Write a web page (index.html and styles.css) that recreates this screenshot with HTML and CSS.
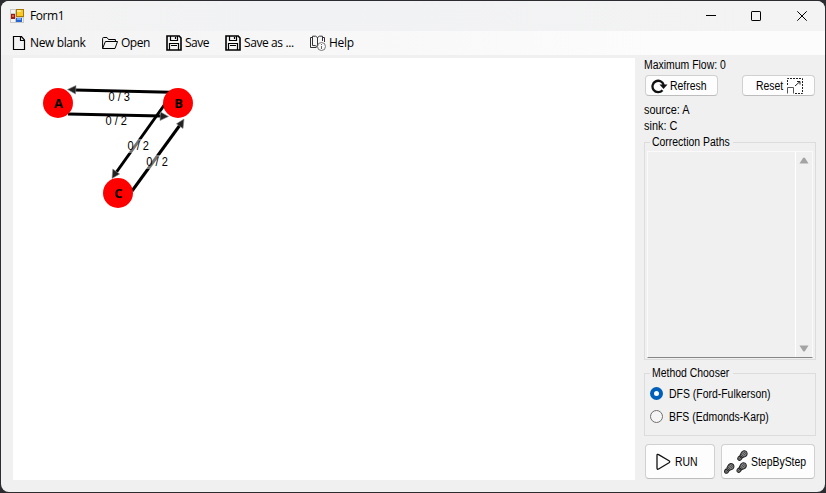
FILE: index.html
```html
<!DOCTYPE html>
<html lang="en">
<head>
<meta charset="utf-8">
<title>Form1</title>
<link rel="stylesheet" href="styles.css">
</head>
<body>
<div class="window">
  <header class="titlebar">
    <svg class="app-icon" width="14" height="14" viewBox="0 0 14 14" shape-rendering="crispEdges">
      <rect width="14" height="14" fill="#c9c9c9"/><rect x="1" y="1" width="4" height="3" fill="#f4f4f4"/><rect x="1" y="10" width="4" height="3" fill="#f4f4f4"/><rect x="12" y="9" width="1" height="4" fill="#f4f4f4"/>
      <rect x="6" y="0" width="8" height="8" fill="#a87808"/><rect x="7" y="1" width="6" height="6" fill="#fbc926"/><rect x="7" y="1" width="4" height="2" fill="#ffe58a"/>
      <rect x="1" y="5" width="4" height="5" fill="#9b1c12"/><rect x="2" y="6" width="2" height="2" fill="#e0604a"/>
      <rect x="6" y="9" width="6" height="4" fill="#2766d0"/><rect x="7" y="9" width="4" height="2" fill="#76a8f4"/>
    </svg>
    <span class="title">Form1</span>
    <div class="controls">
      <svg width="10" height="10" viewBox="0 0 10 10"><path d="M0 4.5H10"/></svg>
      <svg width="10" height="10" viewBox="0 0 10 10"><rect x=".5" y=".5" width="9" height="9" rx=".6"/></svg>
      <svg width="10" height="10" viewBox="0 0 10 10"><path d="M.3.3 9.7 9.7M9.7.3.3 9.7"/></svg>
    </div>
  </header>
  <nav class="toolbar">
    <div class="tool new"><svg width="16" height="16" viewBox="0 0 16 16"><path stroke-width="1.200" d="M2.500 1.500h8l3 3.500v9.500h-11zM9.500 1.500v4h4"/></svg><span>New blank</span></div>
    <div class="tool open"><svg width="16" height="16" viewBox="0 0 16 16"><path d="M.6 13.5V3.5q0-1 1-1H5l1.500 2h6.900v2M.6 13.500 3.400 6.500h12.100l-2.500 7H.6"/></svg><span>Open</span></div>
    <div class="tool save"><svg width="16" height="16" viewBox="0 0 16 16"><path stroke-width="1.600" d="M1 1h12.200L15 3v12H1z"/><path stroke-width="1.200" d="M4.500 1v4.500h7V1M9.500 2v2M3.500 15V8.500h9V15M5 10.500h6"/></svg><span>Save</span></div>
    <div class="tool saveas"><svg width="16" height="16" viewBox="0 0 16 16"><path stroke-width="1.600" d="M1 1h12.200L15 3v12H1z"/><path stroke-width="1.200" d="M4.500 1v4.500h7V1M9.500 2v2M3.500 15V8.500h9V15M5 10.500h6"/></svg><span>Save as ...</span></div>
    <div class="tool help"><svg width="16" height="16" viewBox="0 0 16 16"><path stroke="#333" d="M7.500 11V2.500Q6 .5 2.500 1.200v9.300q3-.3 5 1.200M7.500 2.500Q9 .5 12.500 1.200V6M2.500 2.500h-2v10h6M12.500 2.500h2V7"/><circle cx="11.500" cy="11.500" r="4" stroke="#777"/><path stroke="#666" d="M11.500 9v1M11.500 11v3"/></svg><span>Help</span></div>
  </nav>
  <main class="content">
    <svg class="canvas" width="622" height="422" viewBox="13 58 622 422">
      <g class="edges">
        <path d="M170 92.200 75 90"/><path d="M68 114 161 116"/><path d="M165 104 116.500 172"/><path d="M132 191 180 125"/>
      </g>
      <g class="heads">
        <path d="M67.500 89.500 76 85.500 75.500 94z"/><path d="M168.500 116.500 160 120.500 160.500 112z"/><path d="M112 178.500 112.800 169 119.600 174z"/><path d="M184 119 183 128.500 176.500 123.800z"/>
      </g>
      <g class="nodes"><circle cx="58" cy="103" r="15"/><circle cx="178" cy="103" r="15"/><circle cx="118" cy="193" r="15"/></g>
      <g class="plates"><rect x="127" y="139" width="22" height="14"/><rect x="146" y="155" width="22" height="14"/></g>
      <g class="weights">
        <text x="108.500" y="101" textLength="21.500" lengthAdjust="spacingAndGlyphs">0 / 3</text><text x="105.500" y="125" textLength="21.500" lengthAdjust="spacingAndGlyphs">0 / 2</text>
        <text x="127.500" y="150" textLength="21.500" lengthAdjust="spacingAndGlyphs">0 / 2</text><text x="146.300" y="166" textLength="21.500" lengthAdjust="spacingAndGlyphs">0 / 2</text>
      </g>
      <g class="names"><text x="58.500" y="108">A</text><text x="178.500" y="108">B</text><text x="118.500" y="198">C</text></g>
    </svg>
    <aside class="side">
      <div class="line flow"><span class="label">Maximum Flow: 0</span></div>
      <div class="buttons">
        <button class="btn refresh"><svg width="17" height="16" viewBox="0 0 17 16"><path d="M11.500 12.200A5.700 5.700 0 1 1 12.700 7" fill="none" stroke="#111" stroke-width="2.300"/><path d="M8.500 6.500H16.500L12.500 11z" fill="#111"/></svg><span class="label">Refresh</span></button>
        <button class="btn reset"><span class="label">Reset</span><svg width="16" height="16" viewBox="0 0 16 16" fill="none" stroke="#222"><path d="M.5 7V.5h15v15H8" stroke-dasharray="2 1"/><path d="M.5 15.500v-6h6v6" stroke="#555"/><path d="m8 8 5-4.500M10 3.500h3v3"/></svg></button>
      </div>
      <div class="line source"><span class="label wide">source: A</span></div>
      <div class="line"><span class="label wide">sink: C</span></div>
      <fieldset class="group paths">
        <legend class="lg-paths"><span class="label">Correction Paths</span></legend>
        <div class="listbox"><div class="scroll"><svg width="10" height="7" viewBox="0 0 10 7"><path d="M.5 6.500 4 1q1-1 2 0l3.500 5.500z"/></svg><svg width="10" height="7" viewBox="0 0 10 7"><path d="M.5 .5 4 6q1 1 2 0L9.500 .5z"/></svg></div></div>
      </fieldset>
      <fieldset class="group method">
        <legend class="lg-method"><span class="label">Method Chooser</span></legend>
        <div class="radio on"><i></i><span class="label">DFS (Ford-Fulkerson)</span></div>
        <div class="radio"><i></i><span class="label">BFS (Edmonds-Karp)</span></div>
      </fieldset>
      <div class="actions">
        <button class="btn run"><svg width="15" height="18" viewBox="0 0 15 18" fill="none" stroke="#111" stroke-width="1.300"><path d="M1 2.500Q1 .8 2.600 1.600L13 7.800q1.500 1 0 2L2.600 16Q1 16.800 1 15z"/></svg><span class="label">RUN</span></button>
        <button class="btn step">
          <svg width="24" height="24" viewBox="0 0 24 24">
            <defs><g id="foot"><path d="M-2.200-.8C-4.200-6.800 3.600-7.400 3.400-2.300 3.200-.6 2.100 0 2 1.200H-1.600zM-1.600 2.400H2C3.200 6.800-2.600 7-1.600 2.400z" fill="#888" stroke="#222"/><path d="M-2-2.300H2.600M-1.800-.4H2.200M-1.400-4H2.300M-1.500 4.200H2" stroke="#333" stroke-width=".7"/></g></defs>
            <use href="#foot" transform="translate(18 5.500) rotate(42)"/><use href="#foot" transform="translate(4.800 18.300) rotate(42)"/><use href="#foot" transform="translate(17.200 17.500) rotate(42)"/>
          </svg><span class="label">StepByStep</span></button>
      </div>
    </aside>
  </main>
</div>
</body>
</html>
```
FILE: styles.css
```css
* { box-sizing: border-box; }
body { margin: 0; width: 826px; height: 493px; overflow: hidden; padding: 1px; background: #2b2b30; font-family: "Liberation Sans", Arial, sans-serif; font-size: 12px; color: #000; }
.window { width: 824px; height: 491px; border-radius: 8px; overflow: hidden; background: #f0f0f0; }
.titlebar { height: 30px; display: flex; align-items: center; padding: 0 18px 1px 9px; background: linear-gradient(90deg, #f3f3f3, #f1f2f4 35%, #f3f3f3); }
.title { margin-left: 6px; font-family: "Open Sans", sans-serif; letter-spacing: -.45px; }
.controls { margin-left: auto; display: flex; gap: 35px; }
.controls svg { display: block; fill: none; stroke: #000; overflow: visible; }
.controls svg:nth-child(-n+2) { margin-left: -1px; margin-right: 1px; }
.toolbar { height: 24px; display: flex; align-items: center; padding-left: 10px; background: linear-gradient(90deg, #f3f3f3, #fcfcfc 80%); font-family: "Open Sans", sans-serif; }
.tool { display: flex; align-items: center; white-space: nowrap; }
.tool svg { flex: none; fill: none; stroke: #000; margin-right: 3px; }
.tool span { height: 18px; line-height: 17px; }
.new { width: 91px; letter-spacing: -.38px; }
.open { width: 64px; letter-spacing: -.5px; }
.save { width: 59px; letter-spacing: -.5px; }
.saveas { width: 85px; letter-spacing: -.4px; }
.help { letter-spacing: -.25px; }
.content { display: flex; padding: 3px 9px 0 12px; }
.canvas { flex: none; display: block; background: #fff; }
.edges { stroke: #000; stroke-width: 3; fill: none; }
.heads { fill: #222; stroke: #888; stroke-width: .6; }
.nodes { fill: #f00; }
.plates { fill: #fff; opacity: .45; }
.weights { font-size: 12px; }
.names { font-family: "Open Sans", sans-serif; font-size: 13px; font-weight: 700; text-anchor: middle; }
.side { width: 172px; margin-left: 9px; white-space: nowrap; }
.label { display: inline-block; transform: scaleX(.87); transform-origin: left center; }
.label.wide { transform: scaleX(.91); }
.line { height: 16px; line-height: 16px; }
.flow { line-height: 14px; }
.source { margin-top: 6px; }
.buttons { display: flex; justify-content: space-between; padding: 1px 1px 0; }
.btn { display: flex; align-items: center; font: inherit; color: #000; background: #fdfdfd; border: 1px solid #d0d0d0; border-bottom-color: #bdbdbd; border-radius: 4px; padding: 0; white-space: nowrap; }
.btn svg { flex: none; }
.refresh { width: 73px; height: 21px; padding-left: 5px; gap: 2px; }
.reset { width: 73px; height: 21px; padding-left: 13px; }
.group { margin: 0; min-width: 0; border: 1px solid #dcdcdc; padding: 0 2px; }
.group legend { padding: 0 2px; margin-left: 3px; height: 14px; line-height: 14px; overflow: hidden; }
.lg-paths { width: 83px; }
.lg-method { width: 83px; }
.paths { height: 225px; margin-top: 1px; }
.listbox { height: 207px; margin-top: 2px; border: 1px solid #fafafa; border-bottom-color: #868686; display: flex; justify-content: flex-end; }
.scroll { width: 17px; border-left: 1px solid #fff; display: flex; flex-direction: column; justify-content: space-between; align-items: center; padding: 5px 0; }
.scroll svg { display: block; fill: #a3a3a3; }
.method { height: 70px; margin-top: 6px; }
.radio { display: flex; align-items: center; height: 23px; padding-left: 3px; }
.radio.on { margin-top: 2px; }
.radio i { width: 13px; height: 13px; border: 1px solid #707070; border-radius: 50%; margin-right: 6px; background: #f5f5f5; }
.radio.on i { border: 4px solid #005fb8; background: #fff; }
.actions { display: flex; gap: 6px; padding: 8px 0 0 1px; }
.run { width: 70px; height: 35px; padding-left: 10px; gap: 4px; }
.step { width: 94px; height: 35px; padding-left: 2px; gap: 3px; }
```
